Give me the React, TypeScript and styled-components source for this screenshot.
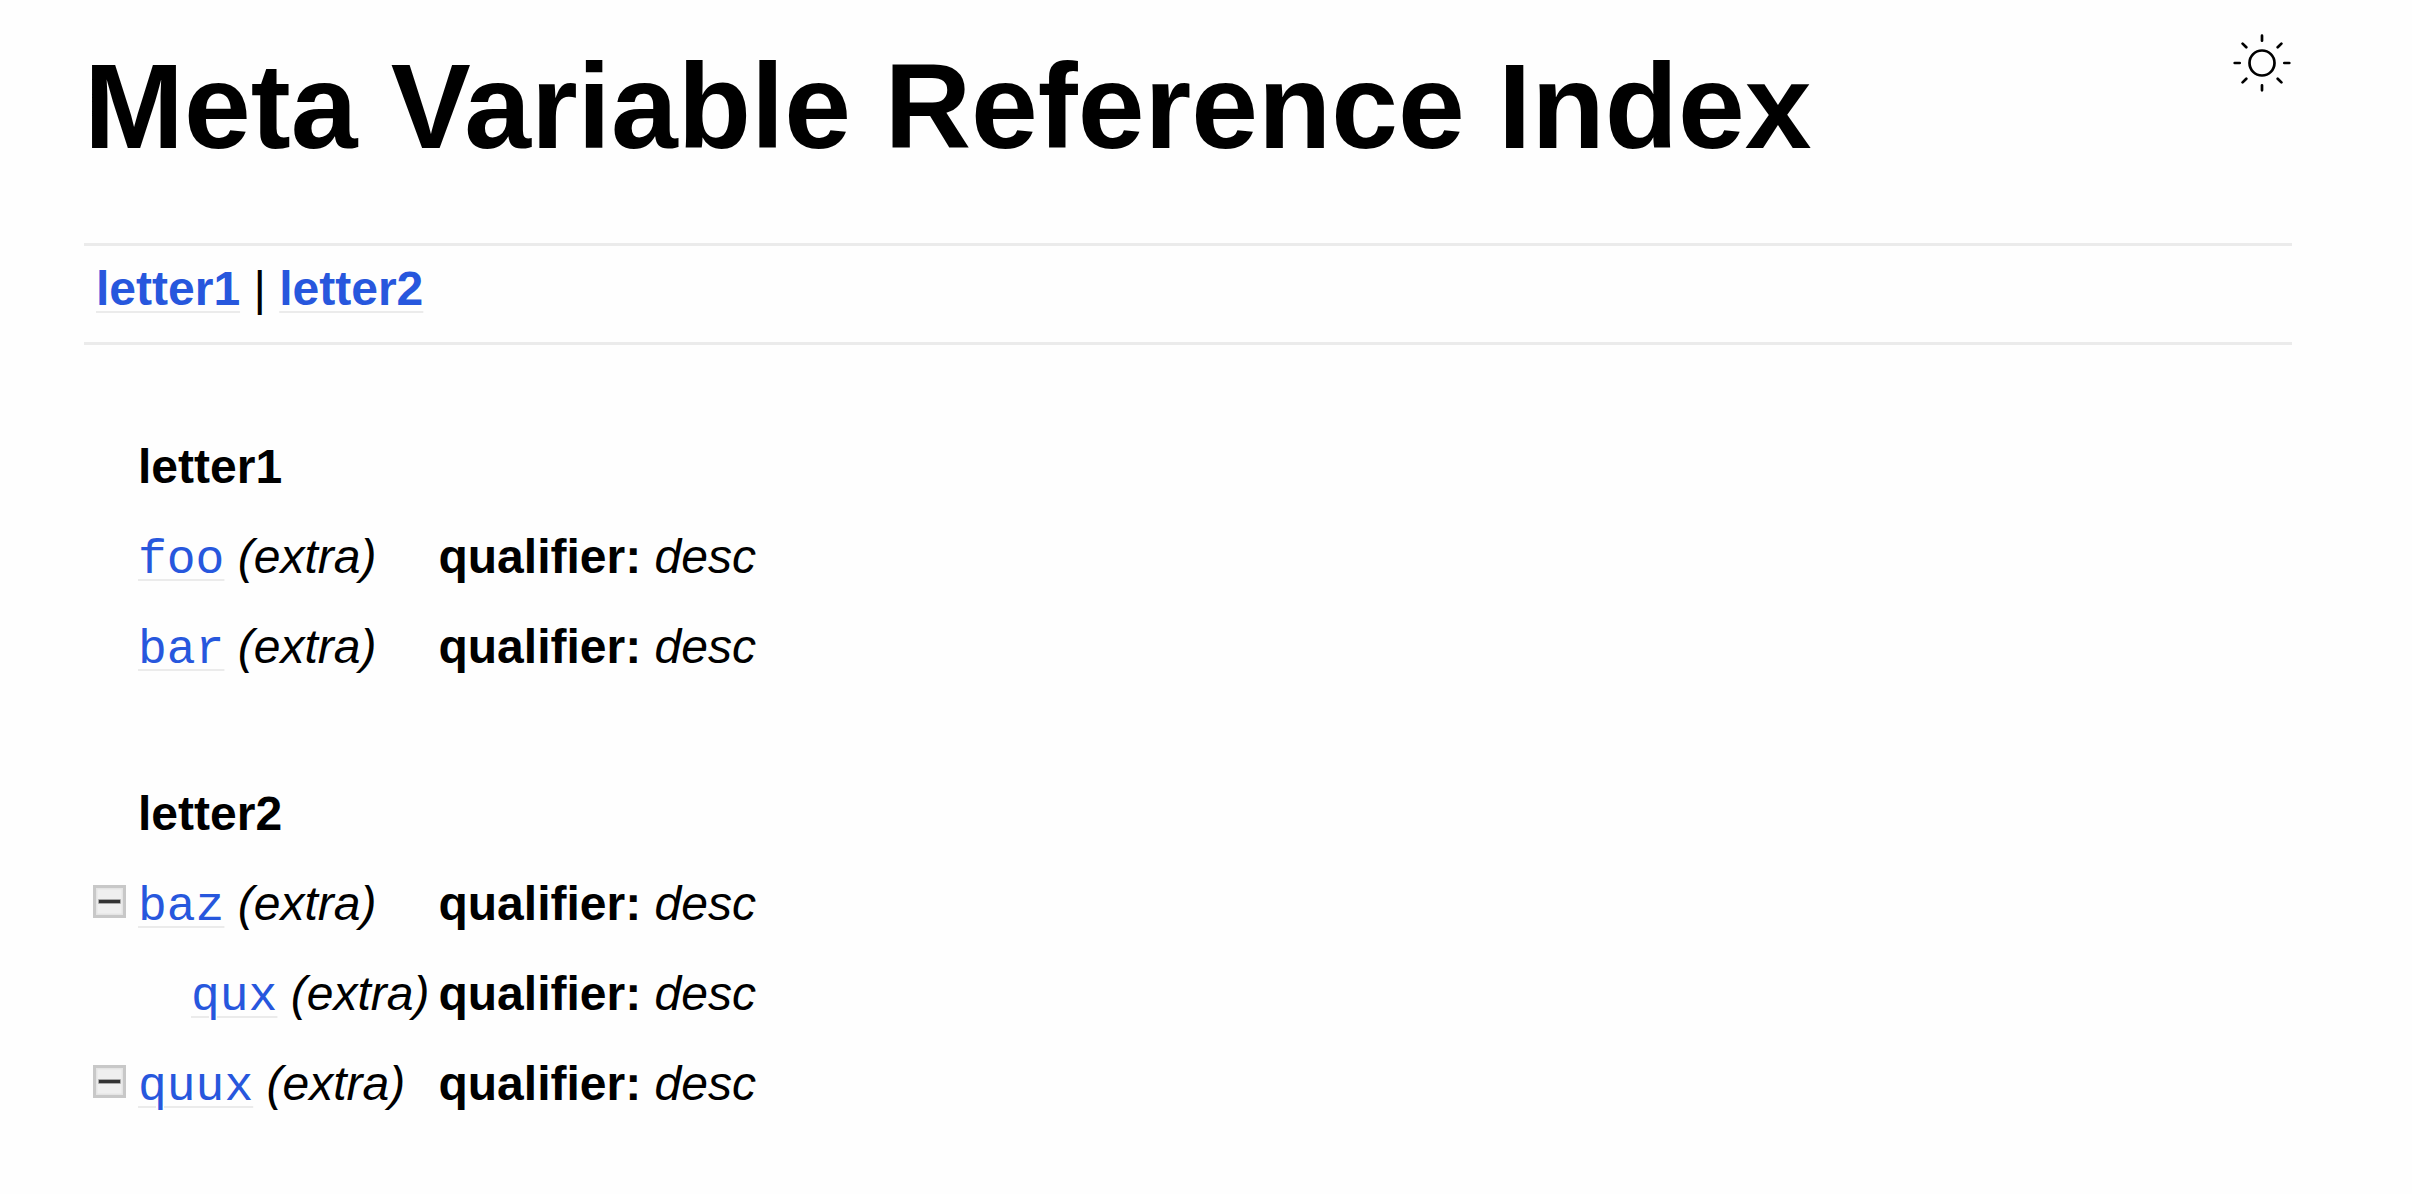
import React, { useState } from "react";
import styled, { createGlobalStyle } from "styled-components";

const GlobalStyle = createGlobalStyle`
  body {
    margin: 0;
    background: #fefefe;
    color: #000;
    font-family: "Liberation Sans", Arial, sans-serif;
    font-size: 48px;
    line-height: 72px;
  }
`;

const Page = styled.main`
  padding: 33px 120px 33px 84px;
`;

const Header = styled.header`
  display: flex;
  align-items: flex-start;
  justify-content: space-between;
  margin-bottom: 64px;
`;

const Title = styled.h1`
  margin: 0;
  font-size: 120px;
  line-height: 146px;
`;

const IconButton = styled.button`
  display: block;
  flex: none;
  padding: 0;
  border: 0;
  background: none;
  color: inherit;
  cursor: pointer;

  svg {
    display: block;
  }
`;

const JumpBox = styled.nav`
  padding: 7px 12px 17px;
  border-top: 3px solid #ebebeb;
  border-bottom: 3px solid #ebebeb;
`;

const Link = styled.a<{ $code?: boolean }>`
  color: #2757dd;
  font-family: ${(p) => (p.$code ? '"Liberation Mono", "Courier New", monospace' : "inherit")};
  font-weight: ${(p) => (p.$code ? 400 : 700)};
  line-height: 1;
  text-decoration: underline 2px #ebebeb;
  text-underline-offset: 6px;
`;

const IndexTable = styled.table`
  border-collapse: collapse;
  line-height: 90px;
  text-align: left;
`;

const GroupHeading = styled.th`
  padding: 77px 0 0;
`;

const ToggleCell = styled.td`
  width: 45px;
  padding: 0 0 6px 9px;
  line-height: 0;
  vertical-align: middle;
`;

const NameCell = styled.td<{ $nested?: boolean }>`
  padding: 0 9px 0 ${(p) => (p.$nested ? 53 : 0)}px;
  vertical-align: baseline;
  white-space: nowrap;
`;

const DescCell = styled.td`
  padding: 0;
  vertical-align: baseline;
`;

type Entry = { name: string; nested?: boolean; toggles?: boolean };

const groups: { letter: string; entries: Entry[] }[] = [
  { letter: "letter1", entries: [{ name: "foo" }, { name: "bar" }] },
  {
    letter: "letter2",
    entries: [
      { name: "baz", toggles: true },
      { name: "qux", nested: true },
      { name: "quux", toggles: true },
    ],
  },
];

const SunIcon = () => (
  <svg width="60" height="60" viewBox="0 0 60 60" fill="none" stroke="currentColor" strokeWidth="2.7" strokeLinecap="round" aria-hidden="true">
    <circle cx="30" cy="30" r="12.5" />
    <path d="M30 2.7v5M30 52.3v5M2.7 30h5M52.3 30h5M10.6 10.6l3.7 3.7M45.7 45.7l3.7 3.7M10.6 49.4l3.7-3.7M45.7 14.3l3.7-3.7" />
  </svg>
);

const ToggleIcon = ({ open }: { open: boolean }) => (
  <svg width="33" height="33" viewBox="0 0 33 33" aria-hidden="true">
    <rect width="33" height="33" fill="#c8c8c8" />
    <rect x="3" y="3" width="27" height="27" fill="#e4e4e4" />
    <rect x="4.5" y="4.5" width="24" height="24" fill="#efefef" />
    <rect x="5" y="14" width="23" height="5" rx="1" fill="#a8a8a8" />
    <rect x="6" y="15" width="21" height="3" fill="#333" />
    {!open && <rect x="15" y="6" width="3" height="21" fill="#333" />}
  </svg>
);

export default function App() {
  const [closed, setClosed] = useState<string[]>([]);
  const toggle = (name: string) =>
    setClosed((c) => (c.includes(name) ? c.filter((n) => n !== name) : [...c, name]));

  return (
    <>
      <GlobalStyle />
      <Page>
        <Header>
          <Title>Meta Variable Reference Index</Title>
          <IconButton type="button" aria-label="Toggle color theme">
            <SunIcon />
          </IconButton>
        </Header>
        <JumpBox>
          {groups.map((g, i) => (
            <React.Fragment key={g.letter}>
              {i > 0 && " | "}
              <Link href={`#${g.letter}`}>{g.letter}</Link>
            </React.Fragment>
          ))}
        </JumpBox>
        <IndexTable>
          {groups.map((g) => (
            <tbody key={g.letter}>
              <tr id={g.letter}>
                <td />
                <GroupHeading colSpan={2} scope="rowgroup">
                  {g.letter}
                </GroupHeading>
              </tr>
              {g.entries
                .filter((e) => !(e.nested && closed.includes("baz")))
                .map((e) => (
                  <tr key={e.name}>
                    <ToggleCell>
                      {e.toggles && (
                        <IconButton type="button" aria-label={`Toggle ${e.name}`} onClick={() => toggle(e.name)}>
                          <ToggleIcon open={!closed.includes(e.name)} />
                        </IconButton>
                      )}
                    </ToggleCell>
                    <NameCell $nested={e.nested}>
                      <Link $code href={`#${e.name}`}>
                        {e.name}
                      </Link>{" "}
                      <em>(extra)</em>
                    </NameCell>
                    <DescCell>
                      <strong>qualifier:</strong> <em>desc</em>
                    </DescCell>
                  </tr>
                ))}
            </tbody>
          ))}
        </IndexTable>
      </Page>
    </>
  );
}
